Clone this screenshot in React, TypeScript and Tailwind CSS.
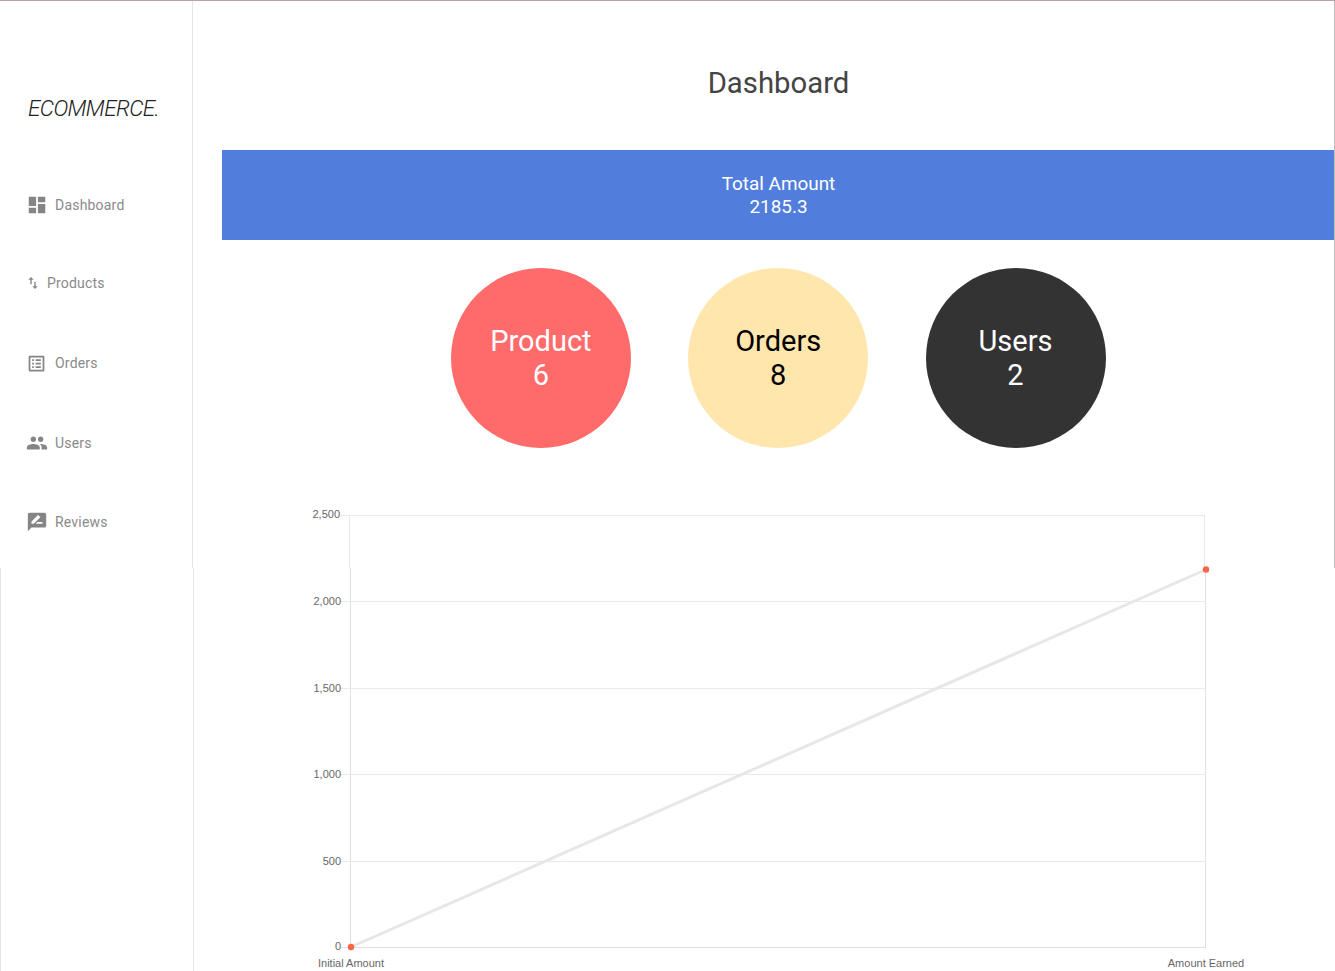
// App.tsx
import React from 'react'
import {
  MdDashboard,
  MdImportExport,
  MdListAlt,
  MdPeople,
  MdRateReview,
} from 'react-icons/md'

const navItems = [
  { label: 'Dashboard', Icon: MdDashboard, icon: 'text-[22px]', row: 'h-[24px] mt-[72px] gap-[7.5px] ml-[25.5px]' },
  { label: 'Products', Icon: MdImportExport, icon: 'text-[16px]', row: 'h-[24px] mt-[54px] gap-[6.5px] ml-[24.5px]' },
  { label: 'Orders', Icon: MdListAlt, icon: 'text-[21px]', row: 'h-[24px] mt-[56px] gap-[8px] ml-[26px]' },
  { label: 'Users', Icon: MdPeople, icon: 'text-[22px]', row: 'h-[24px] mt-[56px] gap-[7px] ml-[26px]' },
  { label: 'Reviews', Icon: MdRateReview, icon: 'text-[22px]', row: 'h-[24px] mt-[55px] gap-[7.5px] ml-[25.5px]' },
]

const stats = [
  { label: 'Product', value: 6, className: 'bg-[#ff6b6b] text-white' },
  { label: 'Orders', value: 8, className: 'bg-[#ffe6ad] text-black' },
  { label: 'Users', value: 2, className: 'bg-[#333333] text-white' },
]

const gridLines = [601.5, 688.5, 774.5, 861.5]
const yLabels = [
  { text: '2,500', x: 340, y: 518 },
  { text: '2,000', x: 341, y: 605 },
  { text: '1,500', x: 341, y: 692 },
  { text: '1,000', x: 341, y: 778 },
  { text: '500', x: 341, y: 865 },
  { text: '0', x: 341, y: 950 },
]

// the reference is two captures stitched at y=568, so the chart lines jump 1px there
const Chart = () => (
  <svg width="960" height="471" viewBox="300 500 960 471" className="block opacity-[0.99]">
    <g fill="none" stroke="#e9e9e9" strokeWidth="1">
      <path d="M340 515.5H1205M1204.5 515V568M349.5 515V568" />
      <path d="M350.5 568V947M1205.5 568V947M341 947.5H1206" stroke="#e0e0e0" />
      {gridLines.map((y) => (
        <path key={y} d={`M341 ${y}H1206`} />
      ))}
    </g>
    <path d="M351 947L1206 569.5" stroke="#e7e7e7" strokeWidth="3" fill="none" />
    <circle cx="351" cy="947" r="3.2" fill="#ff6347" />
    <circle cx="1206" cy="569.5" r="3.2" fill="#ff6347" />
    <g fontFamily="'Liberation Sans', Arial, sans-serif" fontSize="11" fill="#666666">
      {yLabels.map((l) => (
        <text key={l.text} x={l.x} y={l.y} textAnchor="end">
          {l.text}
        </text>
      ))}
      <text x="351" y="967" textAnchor="middle">Initial Amount</text>
      <text x="1206" y="967" textAnchor="middle">Amount Earned</text>
    </g>
  </svg>
)

const App = () => {
  return (
    <div className="relative flex h-[971px] w-[1335px] overflow-hidden border-t border-[#b9a3a3] bg-white font-['Roboto',sans-serif]">
      {/* Sidebar */}
      <aside className="flex w-[194px] shrink-0 flex-col">
        <div className="h-[567px] w-[193px] border-r border-[#e5e5e5]">
          <div className="pl-[28px] pt-[94px] text-[22.5px] leading-[26px] font-light tracking-[-0.6px] text-[#222222] italic">
            ECOMMERCE.
          </div>
          <nav className="flex flex-col">
            {navItems.map(({ label, Icon, icon, row }) => (
              <div key={label} className={`flex items-center ${row}`}>
                <Icon className={`${icon} text-[#858585]`} />
                <span className="text-[14px] tracking-[0.2px] text-[#8a8a8a]">{label}</span>
              </div>
            ))}
          </nav>
        </div>
        <div className="flex-1 border-x border-[#e5e5e5]" />
      </aside>

      {/* Main */}
      <main className="min-w-0 flex-1">
        <div className="ml-[28px]">
          <h1 className="pt-[64px] text-center text-[29.3px] leading-[36px] text-[#444444]">Dashboard</h1>
          <div className="mt-[49px] flex h-[90px] flex-col items-center justify-center bg-[#517edc] text-[18.9px] leading-[23px] text-white">
            <span>Total Amount</span>
            <span>2185.3</span>
          </div>
          <div className="mt-[28px] flex justify-center gap-[57.3px] pr-[0.6px]">
            {stats.map((s) => (
              <div
                key={s.label}
                className={`flex h-[180px] w-[180px] flex-col items-center justify-center rounded-full text-[29px] leading-[34px] ${s.className}`}
              >
                <span>{s.label}</span>
                <span>{s.value}</span>
              </div>
            ))}
          </div>
        </div>
        <div className="ml-[106px] mt-[52px]">
          <Chart />
        </div>
      </main>

      {/* right edge of the upper capture */}
      <div className="absolute right-0 top-0 h-[567px] w-px bg-[#bdbdbd]" />
    </div>
  )
}

export default App
